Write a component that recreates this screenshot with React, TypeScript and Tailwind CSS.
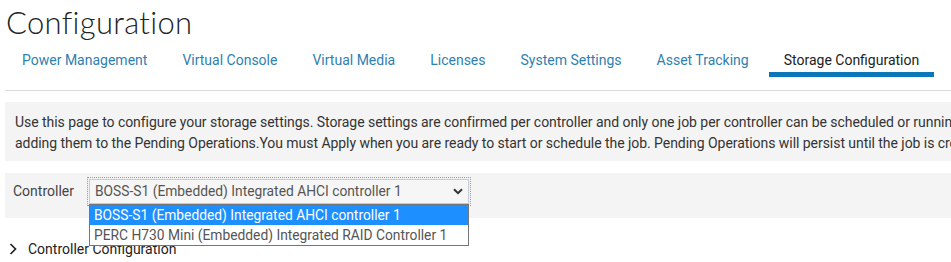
import React from 'react';

const tabs = [
  'Power Management',
  'Virtual Console',
  'Virtual Media',
  'Licenses',
  'System Settings',
  'Asset Tracking',
  'Storage Configuration',
];

function ChevronDown() {
  return (
    <svg width="10" height="7" viewBox="0 0 10 7" className="shrink-0">
      <path d="M1 1.2 L5 5.2 L9 1.2" fill="none" stroke="#333" strokeWidth="2" />
    </svg>
  );
}

function ChevronRight() {
  return (
    <svg width="8" height="12" viewBox="0 0 8 12" className="shrink-0">
      <path d="M1.5 1 L6.5 6 L1.5 11" fill="none" stroke="#222" strokeWidth="1.7" />
    </svg>
  );
}

export default function App() {
  return (
    <div className="relative w-[951px] h-[262px] overflow-hidden bg-white font-['Roboto',sans-serif] text-[#333]">
      <div className="w-[1200px]">
        {/* page title */}
        <h1 className="pl-[6px] pt-[2px] h-[40px] text-[31px] leading-[40px] font-light text-[#222] font-['Lato',sans-serif] tracking-[0.3px]">
          Configuration
        </h1>

        {/* tabs */}
        <nav className="ml-[5px] mt-[10px] flex gap-[5px] pl-[2px] pb-[13px] border-b border-[#dcdcdc]">
          {tabs.map((t) => {
            const active = t === 'Storage Configuration';
            return (
              <div key={t} className="flex flex-col">
                <span
                  className={
                    active
                      ? 'px-[15px] h-[21px] leading-[21px] text-[14px] text-[#222]'
                      : 'px-[15px] h-[21px] leading-[21px] text-[14px] text-[#2f7fb0]'
                  }
                >
                  {t}
                </span>
                <span className={active ? 'mt-[1px] h-[5px] bg-[#0a78b8]' : 'mt-[1px] h-[5px]'} />
              </div>
            );
          })}
        </nav>

        {/* info */}
        <div className="ml-[5px] mt-[11px] bg-[#f4f4f4] pl-[10px] pt-[10px] pb-[7px] text-[14px] leading-[21px] text-[#333] whitespace-nowrap tracking-[-0.05px]">
          <div>
            Use this page to configure your storage settings. Storage settings are confirmed per controller and only one job per controller can be scheduled or running at a time, with changes made
          </div>
          <div>
            adding them to the Pending Operations.You must Apply when you are ready to start or schedule the job. Pending Operations will persist until the job is created.
          </div>
        </div>

        {/* controller select */}
        <div className="ml-[5px] mt-[12px] bg-[#f4f4f4] flex items-start pl-[8px] pt-[6px] pb-[14px]">
          <span className="w-[76px] h-[25px] leading-[25px] text-[14px] text-[#444]">Controller</span>
          <div className="relative">
            <div className="w-[380px] h-[25px] flex items-center justify-between pl-[5px] pr-[5px] border border-[#c3ccd6] bg-[#f6f6f6] outline-1 outline-dotted outline-[#9a9a9a] outline-offset-[1px] text-[13.8px] text-[#555]">
              <span>BOSS-S1 (Embedded) Integrated AHCI controller 1</span>
              <ChevronDown />
            </div>
            <div className="absolute left-0 top-[25px] z-10 w-[380px] border border-[#767676] bg-white text-[13.8px]">
              <div className="h-[20px] leading-[20px] pl-[4px] bg-[#1e8fff] text-white">
                BOSS-S1 (Embedded) Integrated AHCI controller 1
              </div>
              <div className="h-[20px] leading-[20px] pl-[4px] text-[#555]">
                PERC H730 Mini (Embedded) Integrated RAID Controller 1
              </div>
            </div>
          </div>
        </div>

        {/* collapsible section */}
        <div className="mt-[21px] flex items-center pl-[9px] gap-[11px] h-[20px]">
          <ChevronRight />
          <span className="text-[14px] text-[#222]">Controller Configuration</span>
        </div>
      </div>
    </div>
  );
}
